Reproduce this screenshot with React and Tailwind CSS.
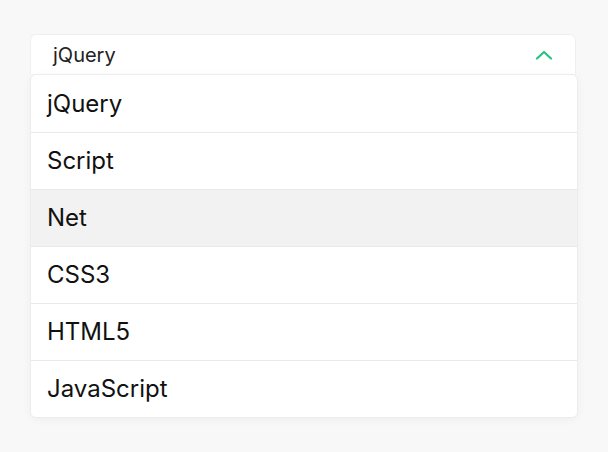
import React, { useState } from 'react';

const options = ['jQuery', 'Script', 'Net', 'CSS3', 'HTML5', 'JavaScript'];

const App = () => {
  const [selected] = useState('jQuery');
  const [hovered, setHovered] = useState('Net');

  return (
    <div className="min-h-[452px] w-[608px] bg-[#f8f8f8] pt-[34px] pl-[30px]" style={{ fontFamily: 'Inter, "Noto Sans", sans-serif' }}>
      <div className="w-[546px] h-[40px] bg-white rounded-t-[6px] border border-[#efefef] border-b-0 flex items-center justify-between pl-[22px] pr-[22px]">
        <span className="text-[20px] text-[#222]">{selected}</span>
        <svg width="18" height="10" viewBox="0 0 18 10" fill="none">
          <path d="M2 8.5 L9 2 L16 8.5" stroke="#22c583" strokeWidth="2.2" strokeLinecap="round" strokeLinejoin="round" />
        </svg>
      </div>
      <ul className="w-[548px] bg-white rounded-[6px] border border-[#ececec] shadow-[0_2px_10px_rgba(0,0,0,0.04)] overflow-hidden">
        {options.map((opt, i) => (
          <li
            key={opt}
            onMouseEnter={() => setHovered(opt)}
            className={`h-[57px] flex items-center pl-[16px] text-[24px] text-[#111] ${i > 0 ? 'border-t border-[#e9e9e9]' : ''} ${hovered === opt ? 'bg-[#f2f2f2]' : ''}`}
          >
            {opt}
          </li>
        ))}
      </ul>
    </div>
  );
};

export default App;
